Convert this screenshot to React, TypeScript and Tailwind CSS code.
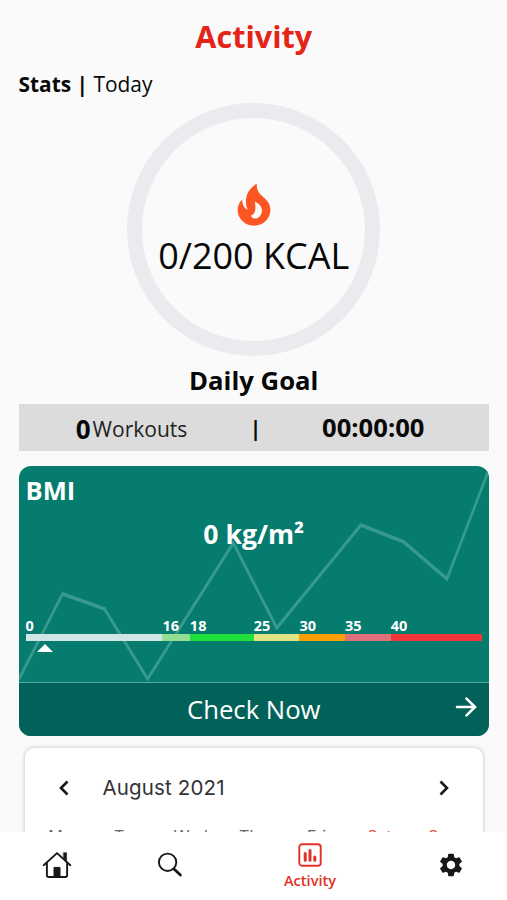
import { MdSettings } from "react-icons/md";

// ─── Data ─────────────────────────────────────────────────────────────────────

const BMI_RANGES = [
  { label: "0", grow: 15, color: "bg-[#d0e6e4]" },
  { label: "16", grow: 3, color: "bg-[#93dd94]" },
  { label: "18", grow: 7, color: "bg-[#1fe03c]" },
  { label: "25", grow: 5, color: "bg-[#dfe384]" },
  { label: "30", grow: 5, color: "bg-[#fb9f04]" },
  { label: "35", grow: 5, color: "bg-[#e0707a]" },
  { label: "40", grow: 10, color: "bg-[#f23738]" },
];

const WEEKDAYS = ["Mon", "Tue", "Wed", "Thu", "Fri", "Sat", "Sun"];

// ─── Icons ────────────────────────────────────────────────────────────────────

function FlameIcon() {
  return (
    <svg viewBox="0 0 34 44" className="h-[44px] w-[34px] fill-[#fd5622]" aria-hidden>
      <path
        fillRule="evenodd"
        d="M19.8 0.6C12 5.5 8.9 12 8.9 19C8.9 22 9.6 24.5 10.8 26.6C7.6 25.6 5.5 22.2 5.1 16.4C2.2 19.3 0.6 23.1 0.6 27.1C0.6 35.8 7.9 42.7 17 42.7C26.2 42.7 33.4 35.7 33.4 26.8C33.4 22.4 31.5 19 28.2 15.8C23.4 11.4 19.2 8.6 19.8 0.6ZM17.8 18.6C23.5 21.6 25.6 25.3 24.8 29C24 32.9 21.3 35.6 18 35.5C15.9 35.4 14.4 34.1 14 32.4C18.9 30.5 19 25 17.8 18.6Z"
      />
    </svg>
  );
}

function HomeIcon() {
  return (
    <svg viewBox="0 0 30 28" className="h-[28px] w-[30px]" fill="none" stroke="#181818" strokeWidth="1.9" strokeLinecap="round" strokeLinejoin="round" aria-hidden>
      <path d="M1.7 14.2L15 2.1L28.3 14.2" />
      <path d="M4.9 12.2V24.2Q4.9 26 6.7 26H23.3Q25.1 26 25.1 24.2V12.2" />
      <path d="M21.6 1.7H24.6V10L21.6 7.3Z" fill="#181818" strokeWidth="0.6" />
      <path d="M12 25.8V16.4H18V25.8Z" fill="#181818" strokeWidth="1" />
    </svg>
  );
}

function SearchIcon() {
  return (
    <svg viewBox="0 0 26 26" className="h-[26px] w-[26px]" fill="none" stroke="#181818" strokeLinecap="round" aria-hidden>
      <circle cx="10.6" cy="10.3" r="8.7" strokeWidth="1.9" />
      <path d="M17 16.9L23.4 23" strokeWidth="2.8" />
    </svg>
  );
}

function ActivityIcon() {
  return (
    <svg viewBox="0 0 24 24" className="h-[24px] w-[24px]" fill="none" stroke="#df3126" strokeLinecap="round" aria-hidden>
      <rect x="1.3" y="1.3" width="21.4" height="21.4" rx="2.8" strokeWidth="1.9" />
      <path d="M7.2 10.4V17.2M12 7.4V17.2M16.8 14V17.2" strokeWidth="3" />
    </svg>
  );
}

function Chevron({ d }: { d: string }) {
  return (
    <svg viewBox="0 0 10 16" className="h-[16px] w-[10px]" fill="none" stroke="#181818" strokeWidth="2.6" aria-hidden>
      <path d={d} />
    </svg>
  );
}

// ─── Sections ─────────────────────────────────────────────────────────────────

function CalorieRing() {
  return (
    <div className="mx-auto mt-[3px] flex h-[253px] w-[253px] flex-col items-center rounded-full border-[15.5px] border-[#ebebef] pt-[65px]">
      <FlameIcon />
      <p className="mt-[4px] text-[36px] leading-[50px] whitespace-nowrap">0/200 KCAL</p>
    </div>
  );
}

function SummaryBar() {
  return (
    <div className="flex h-[47px] items-center bg-[#dcdcdc] pt-[2px]">
      <p className="flex w-[226px] items-center justify-center whitespace-nowrap">
        <span className="text-[26px] leading-[36px] font-bold">0</span>
        <span className="ml-[2px] text-[21px] leading-[30px] text-[#222]">Workouts</span>
      </p>
      <span className="w-[22px] text-center text-[21px] font-bold">|</span>
      <p className="flex-1 pr-[9px] text-center text-[25.6px] font-bold">00:00:00</p>
    </div>
  );
}

function BmiCard() {
  return (
    <section className="relative mt-[15px] flex h-[270px] flex-col overflow-hidden rounded-[12px] bg-[#067c6f] text-white">
      {/* Trend line, stretched vertically over the panel */}
      <svg viewBox="0 0 470 216" preserveAspectRatio="none" className="absolute inset-x-0 top-0 h-[216px] w-full" aria-hidden>
        <g transform="scale(1 1.5)">
          <polyline
            points="0,142 43.5,85.3 85.5,95.3 128.5,142 214,51.3 257.5,108 341.5,39.3 384.5,50.7 427.5,75.3 470,1.3"
            fill="none"
            stroke="#379a8e"
            strokeWidth="2.5"
          />
        </g>
      </svg>

      <div className="relative h-[216px] px-[7px]">
        <h2 className="pt-[7px] text-[25.6px] leading-[36px] font-bold">BMI</h2>
        <p className="mt-[7px] text-center text-[26.6px] leading-[36px] font-bold">0 kg/m²</p>

        <div className="mt-[66px] flex">
          {BMI_RANGES.map((range) => (
            <div key={range.label} style={{ flex: `${range.grow} 0 0px` }} className="min-w-0">
              <span className="block text-[14.5px] leading-[16px] font-bold">{range.label}</span>
              <div className={`h-[6.5px] ${range.color}`} />
            </div>
          ))}
        </div>
        <svg viewBox="0 0 16 8" className="mt-[3px] ml-[11px] h-[8px] w-[16px] fill-white" aria-hidden>
          <path d="M8 0L16 8H0Z" />
        </svg>
      </div>

      <button className="relative flex h-[54px] w-full items-center justify-center border-t border-[#57aaa0] bg-[#026259] pt-[1px] text-[25.7px]">
        Check Now
        <svg viewBox="0 0 22 20" className="absolute top-[14px] right-[12px] h-[20px] w-[22px]" fill="none" stroke="white" strokeWidth="2.6" strokeLinecap="round" aria-hidden>
          <path d="M2 10H19.5M11.5 1.6L20 10L11.5 18.4" />
        </svg>
      </button>
    </section>
  );
}

function CalendarCard() {
  return (
    <section className="mx-[6px] mt-[12px] h-[160px] rounded-[9px] bg-white font-[Inter,sans-serif] text-[#333] shadow-[0_0_4px_rgba(0,0,0,0.25)]">
      <div className="flex items-center px-[34px] pt-[27px]">
        <Chevron d="M8.5 1.5L2 8L8.5 14.5" />
        <h3 className="ml-[34px] flex-1 text-[20.5px] leading-[25px] tracking-[0.15px]">August 2021</h3>
        <Chevron d="M1.5 1.5L8 8L1.5 14.5" />
      </div>
      <div className="mt-[24px] grid grid-cols-7 px-[9px] text-center text-[16px] leading-[24px] text-[#666]">
        {WEEKDAYS.map((day) => (
          <span key={day} className={day.startsWith("S") ? "text-[#e8493d]" : ""}>
            {day}
          </span>
        ))}
      </div>
    </section>
  );
}

function TabBar() {
  return (
    <nav className="relative flex h-[68px] items-center bg-white">
      <button className="flex w-[113px] justify-center pb-[2px]" aria-label="Home">
        <HomeIcon />
      </button>
      <button className="flex w-[113px] justify-center pb-[2px]" aria-label="Search">
        <SearchIcon />
      </button>
      <button className="flex w-[168px] flex-col items-center pt-[1px] text-[14.6px] leading-[20px] font-semibold text-[#df3126]">
        <ActivityIcon />
        <span className="mt-[3px]">Activity</span>
      </button>
      <button className="flex w-[113px] justify-center pb-[3px]" aria-label="Settings">
        <MdSettings className="h-[28px] w-[28px] text-[#181818]" />
      </button>
    </nav>
  );
}

// ─── Screen ───────────────────────────────────────────────────────────────────

export default function App() {
  return (
    <div className="flex h-[900px] w-[507px] flex-col overflow-hidden bg-[#fafafa] font-['Open_Sans',sans-serif] text-[#080808]">
      <main className="min-h-0 flex-1 overflow-hidden pr-[18px] pl-[18.5px]">
        <h1 className="pt-[15px] text-center text-[30.6px] leading-[42px] font-bold text-[#e52317]">Activity</h1>
        <p className="mt-[12px] text-[20.9px] leading-[31px]">
          <span className="font-bold">Stats | </span>Today
        </p>
        <CalorieRing />
        <h2 className="mt-[7px] mb-[5px] text-center text-[25.7px] leading-[36px] font-bold">Daily Goal</h2>
        <SummaryBar />
        <BmiCard />
        <CalendarCard />
      </main>
      <TabBar />
    </div>
  );
}
